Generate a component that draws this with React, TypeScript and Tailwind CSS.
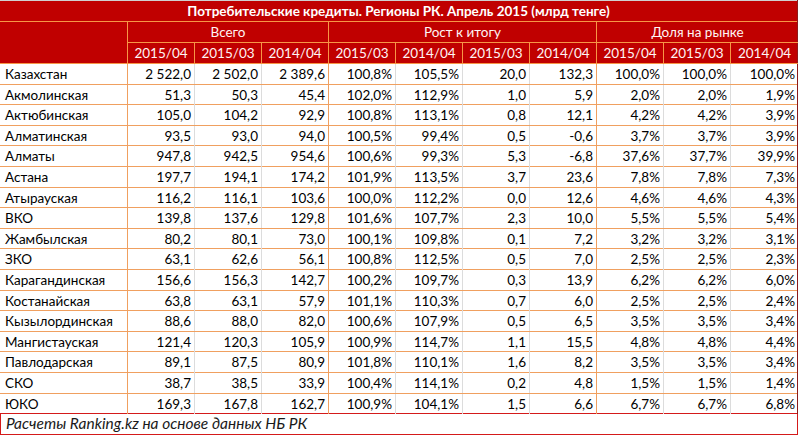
import React from 'react'

type Row = [string, string[]]

const rows: Row[] = [
    ['Казахстан', ['2 522,0', '2 502,0', '2 389,6', '100,8%', '105,5%', '20,0', '132,3', '100,0%', '100,0%', '100,0%']],
    ['Акмолинская', ['51,3', '50,3', '45,4', '102,0%', '112,9%', '1,0', '5,9', '2,0%', '2,0%', '1,9%']],
    ['Актюбинская', ['105,0', '104,2', '92,9', '100,8%', '113,1%', '0,8', '12,1', '4,2%', '4,2%', '3,9%']],
    ['Алматинская', ['93,5', '93,0', '94,0', '100,5%', '99,4%', '0,5', '-0,6', '3,7%', '3,7%', '3,9%']],
    ['Алматы', ['947,8', '942,5', '954,6', '100,6%', '99,3%', '5,3', '-6,8', '37,6%', '37,7%', '39,9%']],
    ['Астана', ['197,7', '194,1', '174,2', '101,9%', '113,5%', '3,7', '23,6', '7,8%', '7,8%', '7,3%']],
    ['Атырауская', ['116,2', '116,1', '103,6', '100,0%', '112,2%', '0,0', '12,6', '4,6%', '4,6%', '4,3%']],
    ['ВКО', ['139,8', '137,6', '129,8', '101,6%', '107,7%', '2,3', '10,0', '5,5%', '5,5%', '5,4%']],
    ['Жамбылская', ['80,2', '80,1', '73,0', '100,1%', '109,8%', '0,1', '7,2', '3,2%', '3,2%', '3,1%']],
    ['ЗКО', ['63,1', '62,6', '56,1', '100,8%', '112,5%', '0,5', '7,0', '2,5%', '2,5%', '2,3%']],
    ['Карагандинская', ['156,6', '156,3', '142,7', '100,2%', '109,7%', '0,3', '13,9', '6,2%', '6,2%', '6,0%']],
    ['Костанайская', ['63,8', '63,1', '57,9', '101,1%', '110,3%', '0,7', '6,0', '2,5%', '2,5%', '2,4%']],
    ['Кызылординская', ['88,6', '88,0', '82,0', '100,6%', '107,9%', '0,5', '6,5', '3,5%', '3,5%', '3,4%']],
    ['Мангистауская', ['121,4', '120,3', '105,9', '100,9%', '114,7%', '1,1', '15,5', '4,8%', '4,8%', '4,4%']],
    ['Павлодарская', ['89,1', '87,5', '80,9', '101,8%', '110,1%', '1,6', '8,2', '3,5%', '3,5%', '3,4%']],
    ['СКО', ['38,7', '38,5', '33,9', '100,4%', '114,1%', '0,2', '4,8', '1,5%', '1,5%', '1,4%']],
    ['ЮКО', ['169,3', '167,8', '162,7', '100,9%', '104,1%', '1,5', '6,6', '6,7%', '6,7%', '6,8%']],
]

const years = ['2015/04', '2015/03', '2014/04', '2015/03', '2014/04', '2015/03', '2014/04', '2015/04', '2015/03', '2014/04']

const grid = 'grid grid-cols-[128px_repeat(10,67px)]'

export default function App() {
    return (
        <div className="w-[800px] h-[436px] bg-white text-[13.5px] text-black" style={{ fontFamily: 'Lato, "Open Sans", sans-serif' }}>
            <div className="w-[798px] border-r border-[#8b1a1a]">
                {/* title */}
                <div className="h-[22px] bg-[#c00000] border-t border-[#d0d0d0] border-b border-b-[#f79646] flex items-center justify-center text-white font-bold">
                    Потребительские кредиты. Регионы РК. Апрель 2015 (млрд тенге)
                </div>

                {/* group + year headers */}
                <div className={`${grid} bg-[#c00000] text-[#fff4f4]`}>
                    <div className="row-span-2 border-r border-b border-[#f79646]" />
                    <div className="col-span-3 h-[21px] flex items-center justify-center border-b border-r border-[#f79646]">Всего</div>
                    <div className="col-span-4 h-[21px] flex items-center justify-center border-b border-r border-[#f79646]">Рост к итогу</div>
                    <div className="col-span-3 h-[21px] flex items-center justify-center border-b border-[#f79646]">Доля на рынке</div>
                    {years.map((y, i) => (
                        <div
                            key={i}
                            className={`h-[21px] flex items-center justify-center border-b border-[#f79646] ${i < 9 ? 'border-r' : ''}`}
                        >
                            {y}
                        </div>
                    ))}
                </div>

                {/* data */}
                {rows.map(([name, vals], r) => (
                    <div
                        key={name}
                        className={`${grid} h-[20.6px] border-b ${r === rows.length - 1 ? 'border-[#d41a1a]' : 'border-[#f0a060]'}`}
                    >
                        <div className="pl-[5px] flex items-center border-r border-[#f0a060] whitespace-nowrap">{name}</div>
                        {vals.map((v, i) => (
                            <div
                                key={i}
                                className={`flex items-center justify-end pr-[3px] ${
                                    i === 2 || i === 6 ? 'border-r border-[#f0a060]' : i === 9 ? '' : 'border-r border-[#dcdcdc]'
                                }`}
                            >
                                {v}
                            </div>
                        ))}
                    </div>
                ))}
            </div>

            {/* footer */}
            <div className="w-[798px] h-[21px] border-x border-b border-[#d41a1a] flex items-center pl-[5px] italic text-[15.5px] text-[#1a1a1a]">
                Расчеты Ranking.kz на основе данных НБ РК
            </div>
        </div>
    )
}
